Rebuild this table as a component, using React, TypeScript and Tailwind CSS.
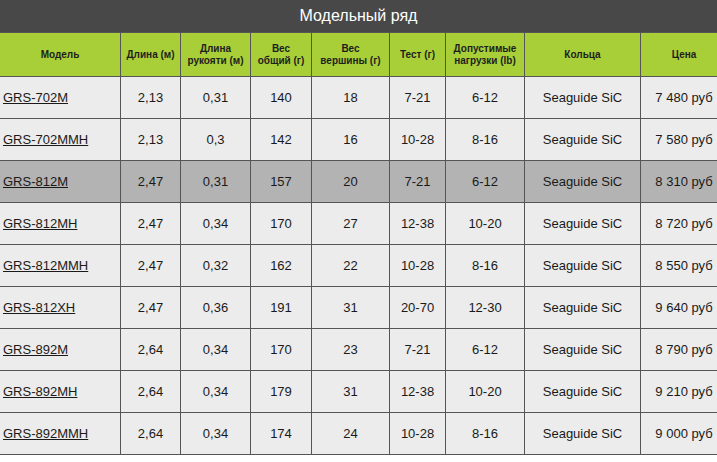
import React from "react";

const rows: string[][] = [
  ["GRS-702M", "2,13", "0,31", "140", "18", "7-21", "6-12", "Seaguide SiC", "7 480 руб"],
  ["GRS-702MMH", "2,13", "0,3", "142", "16", "10-28", "8-16", "Seaguide SiC", "7 580 руб"],
  ["GRS-812M", "2,47", "0,31", "157", "20", "7-21", "6-12", "Seaguide SiC", "8 310 руб"],
  ["GRS-812MH", "2,47", "0,34", "170", "27", "12-38", "10-20", "Seaguide SiC", "8 720 руб"],
  ["GRS-812MMH", "2,47", "0,32", "162", "22", "10-28", "8-16", "Seaguide SiC", "8 550 руб"],
  ["GRS-812XH", "2,47", "0,36", "191", "31", "20-70", "12-30", "Seaguide SiC", "9 640 руб"],
  ["GRS-892M", "2,64", "0,34", "170", "23", "7-21", "6-12", "Seaguide SiC", "8 790 руб"],
  ["GRS-892MH", "2,64", "0,34", "179", "31", "12-38", "10-20", "Seaguide SiC", "9 210 руб"],
  ["GRS-892MMH", "2,64", "0,34", "174", "24", "10-28", "8-16", "Seaguide SiC", "9 000 руб"],
];

const headers: React.ReactNode[] = [
  "Модель",
  "Длина (м)",
  <>Длина<br />рукояти (м)</>,
  <>Вес<br />общий (г)</>,
  <>Вес<br />вершины (г)</>,
  "Тест (г)",
  <>Допустимые<br />нагрузки (lb)</>,
  "Кольца",
  "Цена",
];

export default function App() {
  return (
    <div className="w-[717px] h-[462px] overflow-hidden bg-white" style={{ fontFamily: '"Liberation Sans", Arial, sans-serif' }}>
      <div className="h-[32px] bg-[#484848] flex items-center justify-center text-white text-[16px]">
        Модельный ряд
      </div>
      <div className="w-[727px] grid grid-cols-[120px_59px_69px_60px_77px_55px_78px_115px_86px] gap-px bg-[#555555] py-px">
        {headers.map((h, i) => (
          <div
            key={i}
            className="h-[43px] bg-[#a9cf38] flex items-center justify-center text-center text-[10px] leading-[12px] font-bold text-[#1e1e1e]"
          >
            <span>{h}</span>
          </div>
        ))}
        {rows.map((r, ri) =>
          r.map((c, ci) => (
            <div
              key={ri + "-" + ci}
              className={
                "h-[41px] flex items-center text-[13px] text-[#1a1a1a] " +
                (ri === 2 ? "bg-[#b3b3b3] " : "bg-[#ececec] ") +
                (ci === 0 ? "justify-start pl-[3px]" : "justify-center")
              }
            >
              {ci === 0 ? <span className="underline">{c}</span> : <span>{c}</span>}
            </div>
          ))
        )}
      </div>
    </div>
  );
}
